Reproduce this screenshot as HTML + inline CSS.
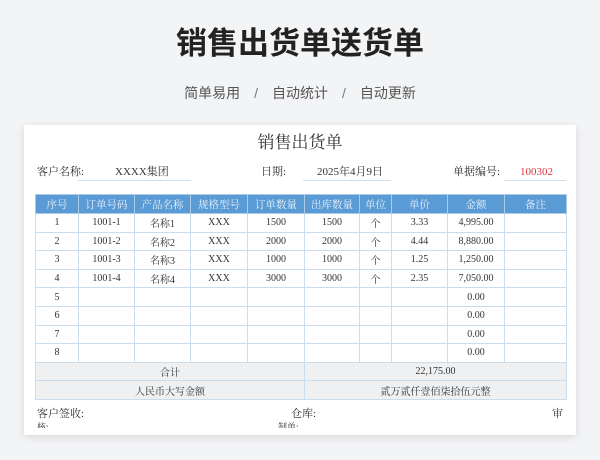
<!DOCTYPE html>
<html><head><meta charset="utf-8"><style>
*{margin:0;padding:0;box-sizing:border-box}
body{width:600px;height:460px;background:#f3f4f6;position:relative;overflow:hidden;font-family:"Liberation Serif","Noto Serif CJK SC",serif;color:#333}
.h1{position:absolute;top:24px;left:0;width:600px;text-align:center;font:bold 31px/40px "Liberation Sans","Noto Sans CJK SC",sans-serif;color:#222;letter-spacing:0}
.sub{position:absolute;top:84px;left:0;width:600px;text-align:center;font:14px/18px "Liberation Sans","Noto Sans CJK SC",sans-serif;color:#555;word-spacing:0}
.sub span{margin:0 14px;color:#777}
.card{position:absolute;left:24px;top:125px;width:552px;height:310px;background:#fff;box-shadow:0 2px 8px rgba(0,0,0,.12)}
.t{position:absolute;font-size:11px;line-height:14px;white-space:nowrap}
.ul{position:absolute;border-bottom:1px solid #cfe0ee;height:1px}
table{position:absolute;left:35px;top:194px;border-collapse:collapse;table-layout:fixed;width:531px;font-size:10px}
td{border:1px solid #c9ddef;text-align:center;height:18.6px;padding:0;white-space:nowrap}
tr.hd td{background:#5b9bd5;color:#e8f1fa;height:19px;border-color:#a9cbe8;font-size:10.5px}
tr.g td{background:#eef0f2;height:18.6px}
</style></head><body>
<div class="h1">销售出货单送货单</div>
<div class="sub">简单易用<span>/</span>自动统计<span>/</span>自动更新</div>
<div class="card"></div>
<div class="t" style="left:0;width:600px;text-align:center;top:133px;font-size:17px;line-height:20px">销售出货单</div>
<div class="t" style="left:37px;top:165px">客户名称:</div>
<div class="t" style="left:115px;top:165px">XXXX集团</div>
<div class="ul" style="left:78px;top:180px;width:113px"></div>
<div class="t" style="left:261px;top:165px">日期:</div>
<div class="t" style="left:317px;top:165px">2025年4月9日</div>
<div class="ul" style="left:303px;top:180px;width:88px"></div>
<div class="t" style="left:453px;top:165px">单据编号:</div>
<div class="t" style="left:520px;top:165px;color:#d9363e">100302</div>
<div class="ul" style="left:504px;top:180px;width:62px"></div>
<table>
<colgroup><col style="width:43px"><col style="width:56px"><col style="width:56px"><col style="width:57px"><col style="width:57px"><col style="width:55px"><col style="width:32px"><col style="width:56px"><col style="width:57px"><col style="width:62px"></colgroup>
<tr class="hd"><td>序号</td><td>订单号码</td><td>产品名称</td><td>规格型号</td><td>订单数量</td><td>出库数量</td><td>单位</td><td>单价</td><td>金额</td><td>备注</td></tr>
<tr><td>1</td><td>1001-1</td><td>名称1</td><td>XXX</td><td>1500</td><td>1500</td><td>个</td><td>3.33</td><td>4,995.00</td><td></td></tr>
<tr><td>2</td><td>1001-2</td><td>名称2</td><td>XXX</td><td>2000</td><td>2000</td><td>个</td><td>4.44</td><td>8,880.00</td><td></td></tr>
<tr><td>3</td><td>1001-3</td><td>名称3</td><td>XXX</td><td>1000</td><td>1000</td><td>个</td><td>1.25</td><td>1,250.00</td><td></td></tr>
<tr><td>4</td><td>1001-4</td><td>名称4</td><td>XXX</td><td>3000</td><td>3000</td><td>个</td><td>2.35</td><td>7,050.00</td><td></td></tr>
<tr><td>5</td><td></td><td></td><td></td><td></td><td></td><td></td><td></td><td>0.00</td><td></td></tr>
<tr><td>6</td><td></td><td></td><td></td><td></td><td></td><td></td><td></td><td>0.00</td><td></td></tr>
<tr><td>7</td><td></td><td></td><td></td><td></td><td></td><td></td><td></td><td>0.00</td><td></td></tr>
<tr><td>8</td><td></td><td></td><td></td><td></td><td></td><td></td><td></td><td>0.00</td><td></td></tr>
<tr class="g"><td colspan="5">合计</td><td colspan="5">22,175.00</td></tr>
<tr class="g"><td colspan="5">人民币大写金额</td><td colspan="5">贰万贰仟壹佰柒拾伍元整</td></tr>
</table>
<div class="t" style="left:37px;top:407px">客户签收:</div>
<div class="t" style="left:291px;top:407px">仓库:</div>
<div class="t" style="left:552px;top:407px">审</div>
<div class="t" style="left:37px;top:420px;font-size:9px;height:8px;overflow:hidden">核:</div>
<div class="t" style="left:278px;top:420px;font-size:9px;height:8px;overflow:hidden">制单:</div>
</body></html>
